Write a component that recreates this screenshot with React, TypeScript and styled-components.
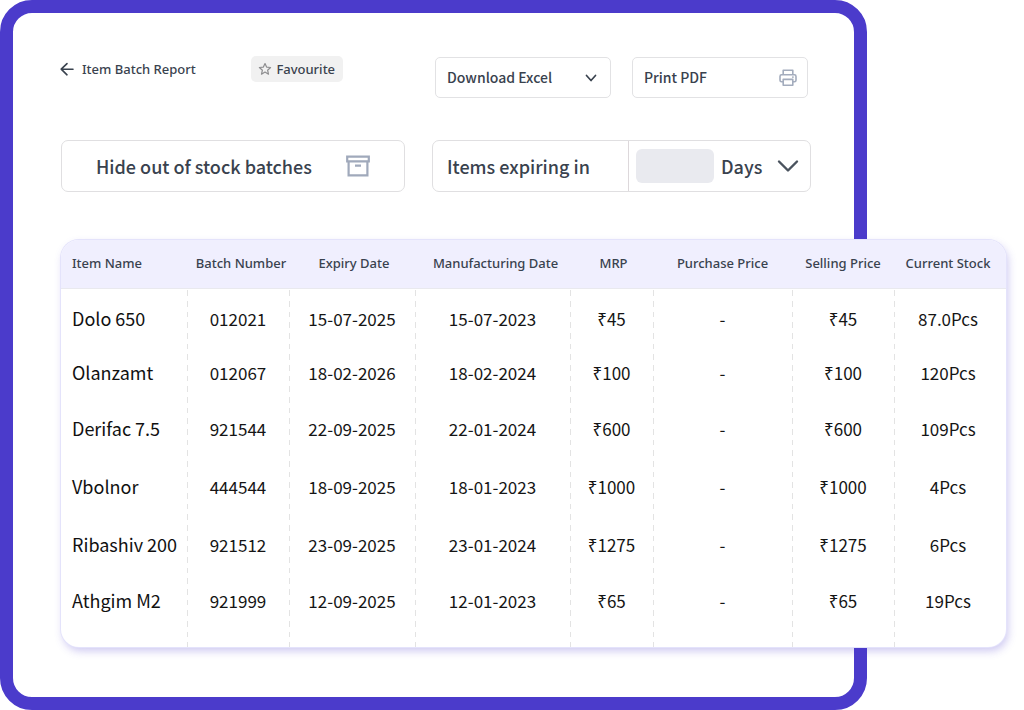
import React from "react";
import styled, { createGlobalStyle } from "styled-components";

const headingFont = `"Noto Sans", "Open Sans", sans-serif`;
const bodyFont = `"Noto Sans CJK SC", "Noto Sans", sans-serif`;

const GlobalStyle = createGlobalStyle`
  * { box-sizing: border-box; }
  body { margin: 0; background: #ffffff; color: #39424e; font-family: ${bodyFont}; }
  button, input, select { font: inherit; color: inherit; }
`;

const Frame = styled.main`
  display: flex;
  flex-direction: column;
  min-height: 100vh;
  margin-right: 157px;
  padding: 43px 0 49px 47px;
  border: 13px solid #4b3bcb;
  border-radius: 32px;
  background: #ffffff;
`;

const TopBar = styled.header`
  display: flex;
  align-items: flex-start;
  padding-right: 46px;
`;

const BackLink = styled.a`
  display: flex;
  align-items: center;
  gap: 8px;
  height: 26px;
  color: #39424e;
  font: 500 13px/20px ${headingFont};
  text-decoration: none;
  white-space: nowrap;
`;

const FavouriteButton = styled.button`
  display: flex;
  align-items: center;
  justify-content: center;
  gap: 4px;
  width: 92px;
  height: 26px;
  margin-left: 55px;
  padding: 0;
  border: 0;
  border-radius: 5px;
  background: #f1f1f1;
  font: 500 13px/20px ${headingFont};
`;

const Actions = styled.div`
  display: flex;
  gap: 21px;
  margin: 1px 0 0 auto;
`;

const ActionButton = styled.button`
  display: flex;
  align-items: center;
  justify-content: space-between;
  width: 176px;
  height: 41px;
  padding: 0 10px 2px 11px;
  border: 1px solid #e2e2e4;
  border-radius: 5px;
  background: #ffffff;
  font-size: 14px;
  font-weight: 500;
  line-height: 22px;
`;

const Filters = styled.section`
  display: grid;
  grid-template-columns: 344fr 379fr;
  gap: 27px;
  margin-top: 42px;
  padding: 0 43px 0 1px;
`;

const StockButton = styled.button`
  display: flex;
  align-items: center;
  justify-content: space-between;
  height: 52px;
  padding: 0 34px;
  border: 1px solid #e0dfe1;
  border-radius: 7px;
  background: #ffffff;
  font-size: 18px;
  font-weight: 500;
  white-space: nowrap;
`;

const ExpiryFilter = styled.div`
  display: flex;
  height: 52px;
  border: 1px solid #e0dfe1;
  border-radius: 7px;
  font-size: 18px;
  font-weight: 500;
`;

const ExpiryLabel = styled.label`
  display: flex;
  flex: 1;
  align-items: center;
  padding-left: 14px;
  border-right: 1px solid #ddd8db;
  white-space: nowrap;
`;

const ExpiryFields = styled.div`
  display: flex;
  align-items: center;
  width: 181px;
  padding: 0 10px 0 7px;
`;

const DaysInput = styled.input`
  width: 78px;
  height: 34px;
  padding: 0 8px;
  border: 0;
  border-radius: 6px;
  background: #e9eaef;
`;

const UnitPicker = styled.div`
  display: flex;
  flex: 1;
  align-items: center;
`;

const UnitSelect = styled.select`
  appearance: none;
  flex: 1;
  width: 100%;
  height: 34px;
  margin-right: -24px;
  padding: 0 24px 0 7px;
  border: 0;
  background: transparent;
`;

const Icon = styled.svg`
  flex: none;
  fill: none;
  pointer-events: none;
`;

const TableCard = styled.section`
  margin: 48px -152px 0 1px;
  overflow: hidden;
  border-radius: 18px;
  background: #ffffff;
  box-shadow: 0 0 0 1px #e4e3fb, 2px 4px 8px rgba(75, 59, 203, 0.28);
`;

const Table = styled.table`
  width: 100%;
  table-layout: fixed;
  border-collapse: separate;
  border-spacing: 0;
`;

const Column = styled.col<{ $width: number; $divided: boolean }>`
  width: ${(p) => p.$width}px;
  ${(p) =>
    p.$divided &&
    `background: linear-gradient(
      #e3e3e3 6px, transparent 6px 11px,
      #e3e3e3 11px 17px, transparent 17px 22px,
      #e3e3e3 22px 27px, transparent 27px
    ) 0 18px / 1px 32px repeat-y;`}
`;

const HeadCell = styled.th<{ $start: boolean; $indent: number }>`
  height: 49px;
  padding: 0 0 3px ${(p) => p.$indent}px;
  border-bottom: 1px solid #e9e9ee;
  background: #f0effe;
  color: #39424e;
  font: 500 13px/20px ${headingFont};
  text-align: ${(p) => (p.$start ? "left" : "center")};
  white-space: nowrap;

  &:last-child {
    padding-right: 4px;
  }
`;

const Row = styled.tr<{ $height: number }>`
  height: ${(p) => p.$height}px;
`;

const Cell = styled.td`
  padding: 17px 0 0;
  color: #151515;
  font-size: 17px;
  line-height: 26px;
  text-align: center;
  vertical-align: top;
  white-space: nowrap;

  &:last-child {
    padding-right: 4px;
  }
`;

const NameCell = styled.th`
  padding: 17px 0 0 11px;
  color: #111111;
  font-size: 18px;
  font-weight: 400;
  line-height: 24px;
  text-align: left;
  vertical-align: top;
  white-space: nowrap;
`;

const columns = [
  { label: "Item Name", width: 126, indent: 11 },
  { label: "Batch Number", width: 102, indent: 6 },
  { label: "Expiry Date", width: 126, indent: 4 },
  { label: "Manufacturing Date", width: 155, indent: 6 },
  { label: "MRP", width: 83, indent: 4 },
  { label: "Purchase Price", width: 139, indent: 0 },
  { label: "Selling Price", width: 102, indent: 0 },
  { label: "Current Stock", width: 112, indent: 0 },
];

const items = [
  { name: "Dolo 650", batch: "012021", expiry: "15-07-2025", made: "15-07-2023", price: "₹45", stock: "87.0Pcs", height: 54 },
  { name: "Olanzamt", batch: "012067", expiry: "18-02-2026", made: "18-02-2024", price: "₹100", stock: "120Pcs", height: 56 },
  { name: "Derifac 7.5", batch: "921544", expiry: "22-09-2025", made: "22-01-2024", price: "₹600", stock: "109Pcs", height: 58 },
  { name: "Vbolnor", batch: "444544", expiry: "18-09-2025", made: "18-01-2023", price: "₹1000", stock: "4Pcs", height: 58 },
  { name: "Ribashiv 200", batch: "921512", expiry: "23-09-2025", made: "23-01-2024", price: "₹1275", stock: "6Pcs", height: 56 },
  { name: "Athgim M2", batch: "921999", expiry: "12-09-2025", made: "12-01-2023", price: "₹65", stock: "19Pcs", height: 76 },
];

export default function App() {
  return (
    <>
      <GlobalStyle />
      <Frame>
        <TopBar>
          <BackLink href="#reports">
            <Icon width="14" height="14" viewBox="0 0 14 14" stroke="#39424e" strokeWidth="1.6" strokeLinecap="round" strokeLinejoin="round" aria-hidden>
              <path d="M13 7.2H1.2M7 1.6 1.2 7.2 7 12.8" />
            </Icon>
            Item Batch Report
          </BackLink>
          <FavouriteButton type="button">
            <Icon width="14" height="14" viewBox="0 0 14 14" stroke="#8e8e90" strokeWidth="1.2" strokeLinejoin="round" aria-hidden>
              <path d="m7 1.5 1.6 3.6 4 .4-3 2.7.9 4L7 10.1l-3.5 2.1.9-4-3-2.7 4-.4z" />
            </Icon>
            Favourite
          </FavouriteButton>
          <Actions>
            <ActionButton type="button" aria-haspopup="menu">
              Download Excel
              <Icon width="18" height="14" viewBox="0 0 18 14" stroke="#39424e" strokeWidth="1.7" strokeLinecap="round" strokeLinejoin="round" aria-hidden>
                <path d="m4.5 5.5 4.5 5 4.5-5" />
              </Icon>
            </ActionButton>
            <ActionButton type="button">
              Print PDF
              <Icon width="18" height="18" viewBox="0 0 18 18" stroke="#a3acbd" strokeWidth="1.6" strokeLinejoin="round" aria-hidden>
                <path d="M4.2 6.6V2.2h9.6v4.4M4.2 13.8H2.6A1.6 1.6 0 0 1 1 12.2V8.4a1.6 1.6 0 0 1 1.6-1.6h12.8A1.6 1.6 0 0 1 17 8.4v3.8a1.6 1.6 0 0 1-1.6 1.6h-1.6M4.2 11.4h9.6v5.8H4.2zM13.2 9.1h1.4" />
              </Icon>
            </ActionButton>
          </Actions>
        </TopBar>

        <Filters>
          <StockButton type="button">
            Hide out of stock batches
            <Icon width="24" height="22" viewBox="0 0 24 22" stroke="#a0a9bb" strokeWidth="2.2" aria-hidden>
              <path d="M1.2 1.7h21.6v4.6H1.2zM2.6 6.3v14h18.8v-14M9 10.7h6" />
            </Icon>
          </StockButton>
          <ExpiryFilter>
            <ExpiryLabel htmlFor="expiry-days">Items expiring in</ExpiryLabel>
            <ExpiryFields>
              <DaysInput id="expiry-days" type="text" inputMode="numeric" />
              <UnitPicker>
                <UnitSelect aria-label="Expiry unit" defaultValue="Days">
                  <option>Days</option>
                </UnitSelect>
                <Icon width="24" height="16" viewBox="0 0 24 16" stroke="#4a535e" strokeWidth="2.4" strokeLinecap="round" strokeLinejoin="round" aria-hidden>
                  <path d="m3 3.5 9 9 9-9" />
                </Icon>
              </UnitPicker>
            </ExpiryFields>
          </ExpiryFilter>
        </Filters>

        <TableCard>
          <Table>
            <colgroup>
              {columns.map((c, i) => (
                <Column key={c.label} $width={c.width} $divided={i > 0} />
              ))}
            </colgroup>
            <thead>
              <tr>
                {columns.map((c, i) => (
                  <HeadCell key={c.label} scope="col" $start={i === 0} $indent={c.indent}>
                    {c.label}
                  </HeadCell>
                ))}
              </tr>
            </thead>
            <tbody>
              {items.map((item) => (
                <Row key={item.name} $height={item.height}>
                  <NameCell scope="row">{item.name}</NameCell>
                  <Cell>{item.batch}</Cell>
                  <Cell>{item.expiry}</Cell>
                  <Cell>{item.made}</Cell>
                  <Cell>{item.price}</Cell>
                  <Cell>-</Cell>
                  <Cell>{item.price}</Cell>
                  <Cell>{item.stock}</Cell>
                </Row>
              ))}
            </tbody>
          </Table>
        </TableCard>
      </Frame>
    </>
  );
}
